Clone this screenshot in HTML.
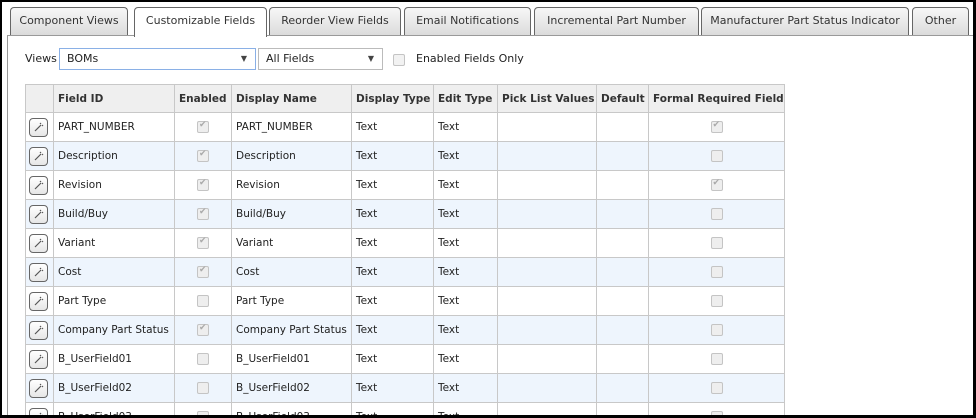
<!DOCTYPE html>
<html><head><style>
*{box-sizing:border-box;margin:0;padding:0}
body{width:976px;height:418px;overflow:hidden;background:#000;font-family:"DejaVu Sans","Liberation Sans",sans-serif;font-size:10.5px;color:#222;position:relative}
#frame{position:absolute;left:2px;top:2px;width:971px;height:413px;background:#fff;overflow:hidden}
.tab{position:absolute;top:5px;height:29px;border:1px solid #666;border-bottom:none;border-radius:4px 4px 0 0;background:linear-gradient(#f7f7f7,#dadada);text-align:center;line-height:26px;font-size:11px;color:#333;white-space:nowrap}
.tab.act{background:#fff;height:30px;z-index:2}
#panel{position:absolute;left:5px;top:33px;width:967px;height:400px;border:1px solid #999}
.sel{position:absolute;height:22px;border:1px solid #bbb;background:#fff;line-height:20px;padding-left:7px;font-size:11px}
.sel:after{content:"▼";position:absolute;right:8px;top:0;font-size:8px;color:#444}
table{position:absolute;left:23px;top:82px;width:759px;border-collapse:collapse;table-layout:fixed;font-size:10.5px}
td,th{border:1px solid #c8c8c8;height:29px;padding:0 4px;white-space:nowrap;overflow:hidden;text-align:left}
th{background:#efefef;height:28px;font-weight:bold;color:#333}
tr.b td{background:#eef5fd}
.c{text-align:center}
.cb{display:inline-block;width:12px;height:12px;border:1px solid #c4c4c4;border-radius:2px;background:#eee;vertical-align:middle;position:relative}
.cb.k:after{content:"✔";position:absolute;left:1px;top:-2px;font-size:9px;color:#aaa}
.ed{display:inline-block;width:19px;height:19px;border:1px solid #666;border-radius:4px;background:linear-gradient(#fff,#e6e6e6);vertical-align:middle}
td.e{padding:0 3px}
</style></head><body><div id="frame">
<div class="tab" style="left:8px;width:118px">Component Views</div>
<div class="tab act" style="left:132px;width:133px">Customizable Fields</div>
<div class="tab" style="left:267px;width:132px">Reorder View Fields</div>
<div class="tab" style="left:402px;width:127px">Email Notifications</div>
<div class="tab" style="left:532px;width:165px">Incremental Part Number</div>
<div class="tab" style="left:699px;width:208px">Manufacturer Part Status Indicator</div>
<div class="tab" style="left:910px;width:57px">Other</div>
<div id="panel"></div>
<div style="position:absolute;left:23px;top:50px;font-size:11px">Views</div>
<div class="sel" style="left:57px;top:46px;width:197px;border-color:#8ab0e6">BOMs</div>
<div class="sel" style="left:256px;top:46px;width:125px">All Fields</div>
<span class="cb" style="position:absolute;left:391px;top:52px;background:#f2f2f2"></span>
<div style="position:absolute;left:414px;top:50px;font-size:11px">Enabled Fields Only</div>
<table>
<colgroup><col style="width:28px"><col style="width:121px"><col style="width:57px"><col style="width:120px"><col style="width:82px"><col style="width:64px"><col style="width:99px"><col style="width:52px"><col style="width:136px"></colgroup>
<tr><th></th><th>Field ID</th><th>Enabled</th><th>Display Name</th><th>Display Type</th><th>Edit Type</th><th>Pick List Values</th><th>Default</th><th>Formal Required Field</th></tr>
<tr><td class="e"><span class="ed"><svg width="17" height="17"><path d="M5 12l6-6M10 5l1-1M12 7l1-1" stroke="#555" stroke-width="1.2"/></svg></span></td><td>PART_NUMBER</td><td class="c"><span class="cb k"></span></td><td>PART_NUMBER</td><td>Text</td><td>Text</td><td></td><td></td><td class="c"><span class="cb k"></span></td></tr>
<tr class="b"><td class="e"><span class="ed"><svg width="17" height="17"><path d="M5 12l6-6M10 5l1-1M12 7l1-1" stroke="#555" stroke-width="1.2"/></svg></span></td><td>Description</td><td class="c"><span class="cb k"></span></td><td>Description</td><td>Text</td><td>Text</td><td></td><td></td><td class="c"><span class="cb"></span></td></tr>
<tr><td class="e"><span class="ed"><svg width="17" height="17"><path d="M5 12l6-6M10 5l1-1M12 7l1-1" stroke="#555" stroke-width="1.2"/></svg></span></td><td>Revision</td><td class="c"><span class="cb k"></span></td><td>Revision</td><td>Text</td><td>Text</td><td></td><td></td><td class="c"><span class="cb k"></span></td></tr>
<tr class="b"><td class="e"><span class="ed"><svg width="17" height="17"><path d="M5 12l6-6M10 5l1-1M12 7l1-1" stroke="#555" stroke-width="1.2"/></svg></span></td><td>Build/Buy</td><td class="c"><span class="cb k"></span></td><td>Build/Buy</td><td>Text</td><td>Text</td><td></td><td></td><td class="c"><span class="cb"></span></td></tr>
<tr><td class="e"><span class="ed"><svg width="17" height="17"><path d="M5 12l6-6M10 5l1-1M12 7l1-1" stroke="#555" stroke-width="1.2"/></svg></span></td><td>Variant</td><td class="c"><span class="cb k"></span></td><td>Variant</td><td>Text</td><td>Text</td><td></td><td></td><td class="c"><span class="cb"></span></td></tr>
<tr class="b"><td class="e"><span class="ed"><svg width="17" height="17"><path d="M5 12l6-6M10 5l1-1M12 7l1-1" stroke="#555" stroke-width="1.2"/></svg></span></td><td>Cost</td><td class="c"><span class="cb k"></span></td><td>Cost</td><td>Text</td><td>Text</td><td></td><td></td><td class="c"><span class="cb"></span></td></tr>
<tr><td class="e"><span class="ed"><svg width="17" height="17"><path d="M5 12l6-6M10 5l1-1M12 7l1-1" stroke="#555" stroke-width="1.2"/></svg></span></td><td>Part Type</td><td class="c"><span class="cb"></span></td><td>Part Type</td><td>Text</td><td>Text</td><td></td><td></td><td class="c"><span class="cb"></span></td></tr>
<tr class="b"><td class="e"><span class="ed"><svg width="17" height="17"><path d="M5 12l6-6M10 5l1-1M12 7l1-1" stroke="#555" stroke-width="1.2"/></svg></span></td><td>Company Part Status</td><td class="c"><span class="cb k"></span></td><td>Company Part Status</td><td>Text</td><td>Text</td><td></td><td></td><td class="c"><span class="cb"></span></td></tr>
<tr><td class="e"><span class="ed"><svg width="17" height="17"><path d="M5 12l6-6M10 5l1-1M12 7l1-1" stroke="#555" stroke-width="1.2"/></svg></span></td><td>B_UserField01</td><td class="c"><span class="cb"></span></td><td>B_UserField01</td><td>Text</td><td>Text</td><td></td><td></td><td class="c"><span class="cb"></span></td></tr>
<tr class="b"><td class="e"><span class="ed"><svg width="17" height="17"><path d="M5 12l6-6M10 5l1-1M12 7l1-1" stroke="#555" stroke-width="1.2"/></svg></span></td><td>B_UserField02</td><td class="c"><span class="cb"></span></td><td>B_UserField02</td><td>Text</td><td>Text</td><td></td><td></td><td class="c"><span class="cb"></span></td></tr>
<tr><td class="e"><span class="ed"><svg width="17" height="17"><path d="M5 12l6-6M10 5l1-1M12 7l1-1" stroke="#555" stroke-width="1.2"/></svg></span></td><td>B_UserField03</td><td class="c"><span class="cb"></span></td><td>B_UserField03</td><td>Text</td><td>Text</td><td></td><td></td><td class="c"><span class="cb"></span></td></tr>
</table>
</div></body></html>
